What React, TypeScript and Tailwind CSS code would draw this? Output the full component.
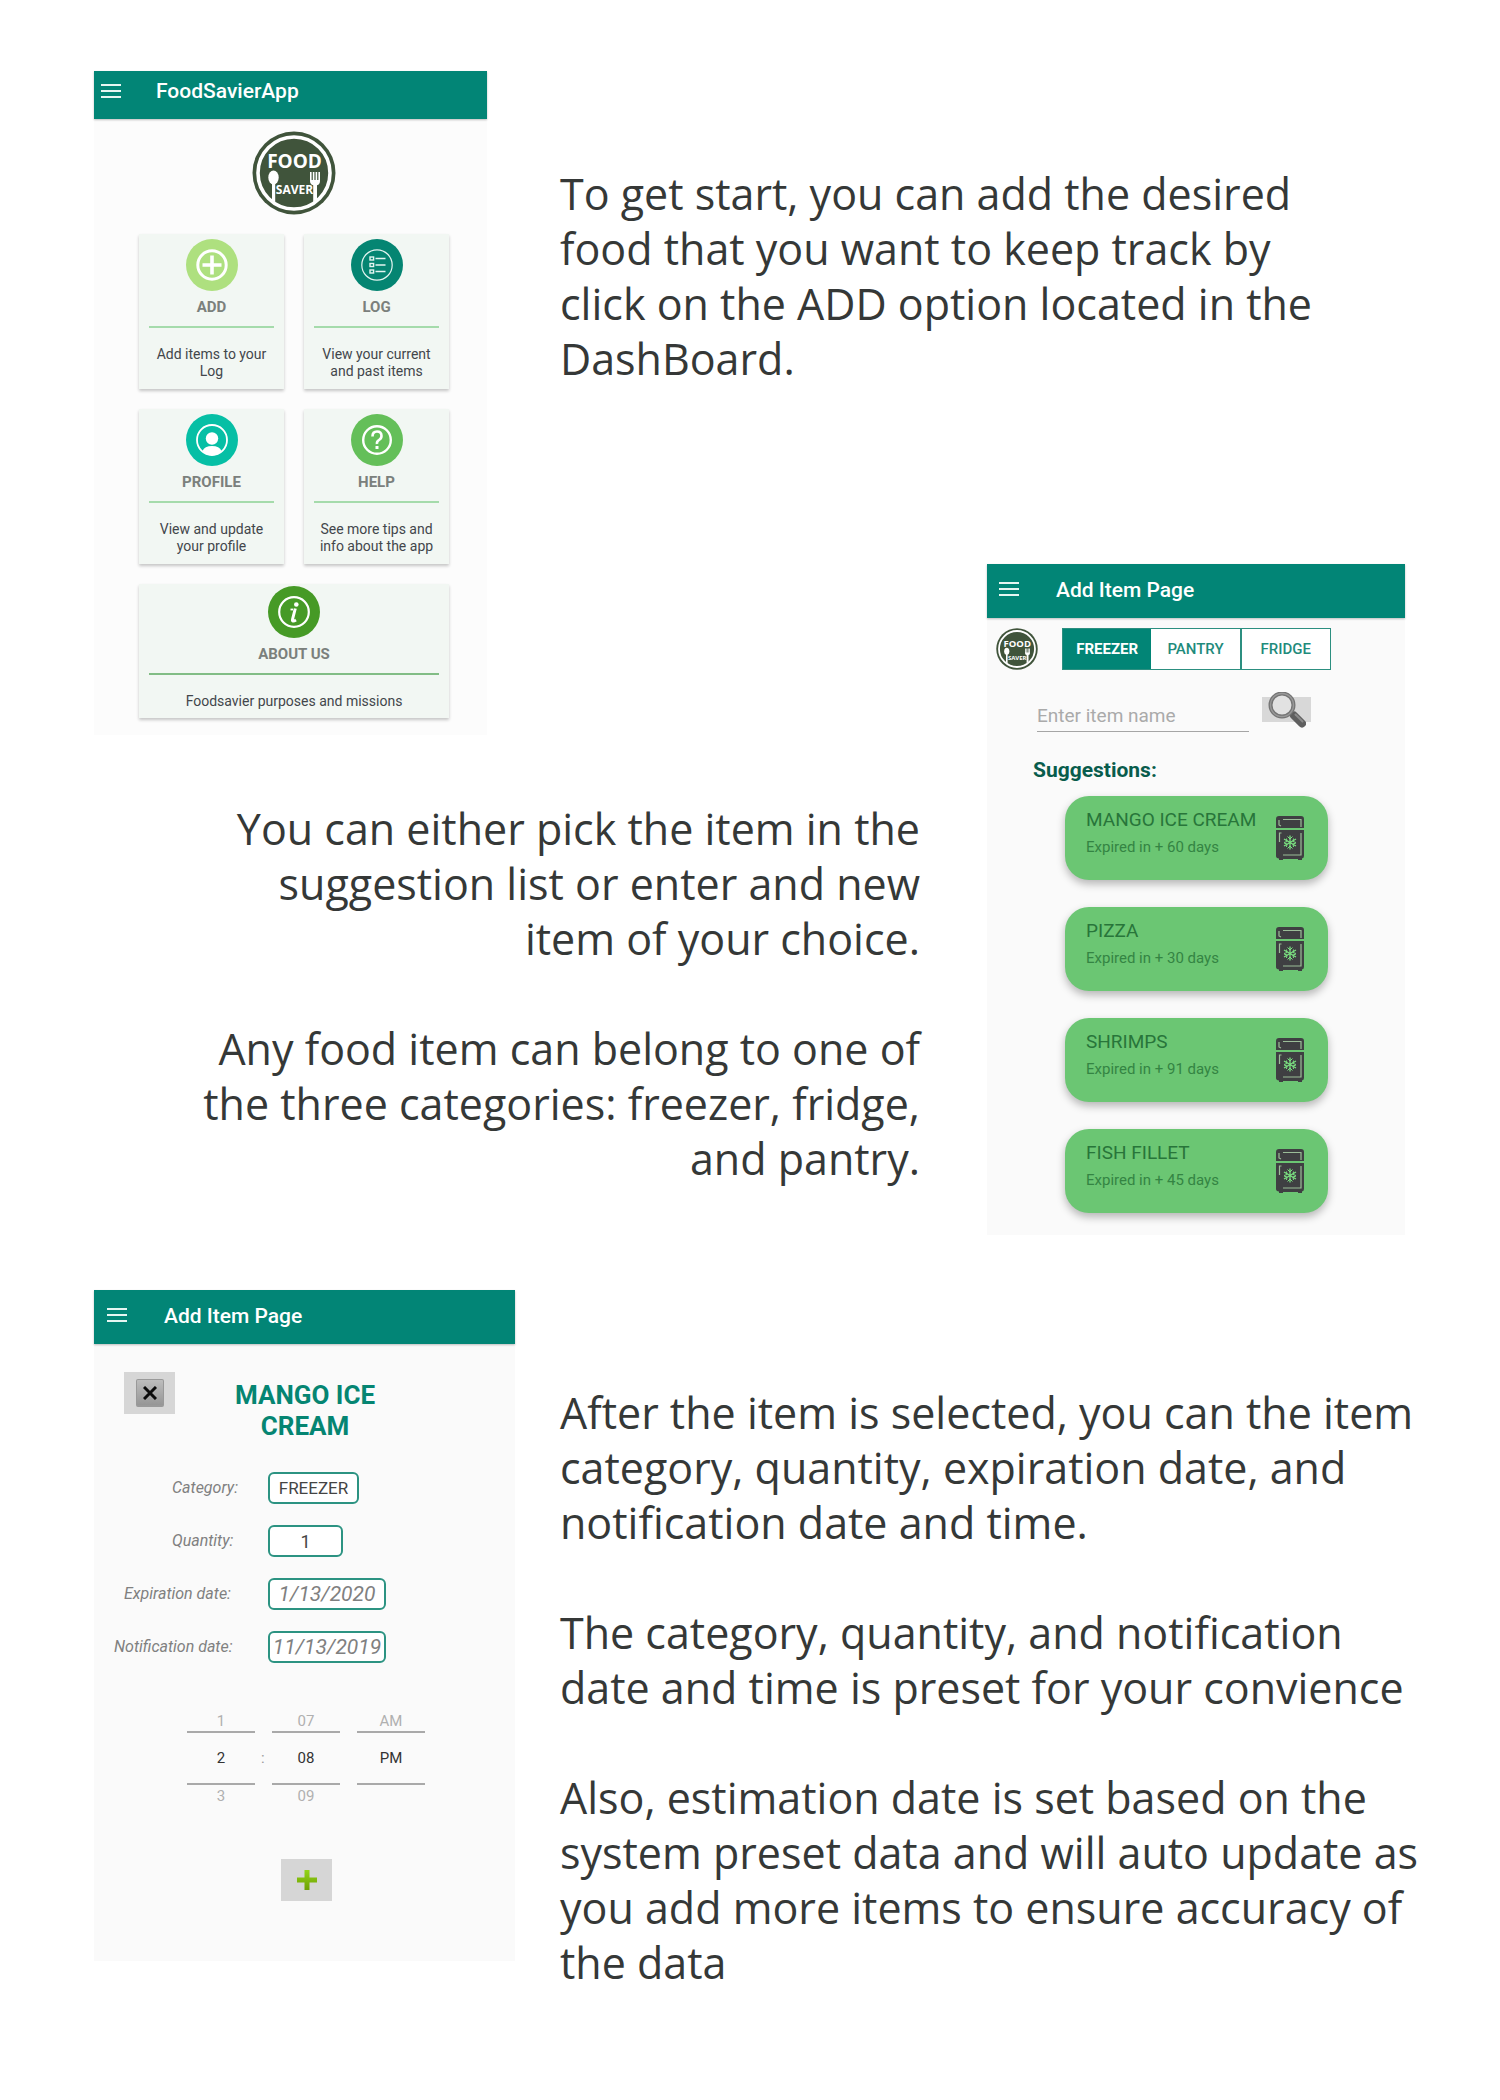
import React from "react";

const roboto = "font-['Roboto',sans-serif]";

function Logo({ className }: { className: string }) {
  return (
    <svg viewBox="0 0 84 84" className={className} role="img" aria-label="Food Saver">
      <circle cx="42" cy="42" r="41.5" fill="#40543b" />
      <circle cx="42" cy="42" r="36" fill="none" stroke="#fff" strokeWidth="3.6" />
      <text x="42.5" y="37" textAnchor="middle" fontFamily="'Open Sans', sans-serif" fontWeight="700" fontSize="19" fill="#fff">
        FOOD
      </text>
      <text x="42.5" y="63" textAnchor="middle" fontFamily="'Open Sans', sans-serif" fontWeight="700" fontSize="12" fill="#fff">
        SAVER
      </text>
      <ellipse cx="21.5" cy="46.5" rx="5.2" ry="7" fill="#fff" />
      <path d="M20 52h3.2v19.5L20 69z" fill="#fff" />
      <path d="M58 41h1.6v8h1.2v-8h1.6v8h1.2v-8h1.6v8h1.2v-8H68v9q0 3.5-3 4.2V68l-3.8 3V54.2Q58 53.5 58 50z" fill="#fff" />
    </svg>
  );
}

function MenuButton({ className }: { className: string }) {
  return (
    <button type="button" aria-label="Open menu" className={className}>
      <svg viewBox="0 0 20 14" className="block h-[14px] w-5" fill="#e6f6f2">
        <rect y="0" width="20" height="2" />
        <rect y="6" width="20" height="2" />
        <rect y="12" width="20" height="2" />
      </svg>
    </button>
  );
}

function AddIcon() {
  return (
    <svg viewBox="0 0 52 52" className="size-[52px]" fill="none" stroke="#fff" aria-hidden="true">
      <circle cx="26" cy="26" r="26" fill="#aee07f" stroke="none" />
      <circle cx="26" cy="26" r="14.2" strokeWidth="3" />
      <path d="M26 16.5v19M16.5 26h19" strokeWidth="3.6" />
    </svg>
  );
}

function LogIcon() {
  return (
    <svg viewBox="0 0 52 52" className="size-[52px]" fill="none" stroke="#e4f5f1" aria-hidden="true">
      <circle cx="26" cy="26" r="26" fill="#058572" stroke="none" />
      <circle cx="26" cy="26" r="15.2" strokeWidth="1.2" />
      <g strokeWidth="1.4">
        <rect x="19" y="18" width="3.6" height="3" />
        <rect x="19" y="24.5" width="3.6" height="3" />
        <rect x="19" y="31" width="3.6" height="3" />
        <path d="M24.5 19.5h10M24.5 26h10M24.5 32.5h10" />
      </g>
    </svg>
  );
}

function ProfileIcon() {
  return (
    <svg viewBox="0 0 52 52" className="size-[52px]" aria-hidden="true">
      <circle cx="26" cy="26" r="26" fill="#06bfa5" />
      <circle cx="26" cy="26" r="15" fill="none" stroke="#fff" strokeWidth="1.8" />
      <circle cx="26" cy="24.500" r="6.2" fill="#fff" />
      <path d="M16.5 37q2-5 9.500-5t9.500 5q-4 4.500-9.500 4.500T16.500 37z" fill="#fff" />
    </svg>
  );
}

function HelpIcon() {
  return (
    <svg viewBox="0 0 52 52" className="size-[52px]" fill="none" stroke="#fff" aria-hidden="true">
      <circle cx="26" cy="26" r="26" fill="#64bf59" stroke="none" />
      <circle cx="26" cy="26" r="13.8" strokeWidth="2.4" />
      <path d="M21.5 22.500q0-5 4.500-5t4.500 4.500q0 2.500-2.500 4t-2 4" strokeWidth="2.6" />
      <path d="M24.5 32h3v3h-3z" fill="#fff" stroke="none" />
    </svg>
  );
}

function InfoIcon() {
  return (
    <svg viewBox="0 0 52 52" className="size-[52px]" fill="none" stroke="#fff" aria-hidden="true">
      <circle cx="26" cy="26" r="26" fill="#469a26" stroke="none" />
      <circle cx="26" cy="26" r="14.8" strokeWidth="2.200" />
      <circle cx="28.3" cy="18.5" r="2.3" fill="#fff" stroke="none" />
      <path d="M22.500 23.500H25" strokeWidth="1.800" />
      <path d="M27.3 22.500l-2.700 10.500q-.8 3.500 3.400 1" strokeWidth="3" />
    </svg>
  );
}

function FridgeIcon() {
  return (
    <svg viewBox="0 0 28 44" className="h-11 w-7 shrink-0" fill="none" aria-hidden="true">
      <path d="M3 0h22q3 0 3 3v9H0V3q0-3 3-3zM0 14h28v26q0 2-2 2.500V44h-4v-1H7v1H3v-1.500Q0 42 0 40z" fill="#3f3f42" />
      <path d="M3 4v5l2 1M7 3.500h18V11M3.500 26v-9h2M25 17v22H7" stroke="#9bbd98" strokeWidth="1.200" />
      <g stroke="#7be081" strokeWidth="1.300">
        <path d="M14 19.500v14M8 23l12 7M20 23L8 30" />
        <path d="M11.500 20.500l2.500 2.500 2.500-2.500M11.500 32.500L14 30l2.500 2.500M8 26.500l3-1-.5-3M20 26.500l-3-1 .5-3M8 27l3 1-.5 3M20 27l-3 1 .5 3" strokeWidth="1" />
      </g>
    </svg>
  );
}

function SearchIcon() {
  return (
    <svg viewBox="0 0 38 36" className="h-9 w-[38px] shrink-0" fill="none" aria-hidden="true">
      <path d="M22 20l4 4" stroke="#8a8a8a" strokeWidth="4" />
      <path d="M26 23.500l8 8" stroke="#5f5f5f" strokeWidth="8" strokeLinecap="round" />
      <path d="M27.500 22.500l7 7" stroke="#8b8b8b" strokeWidth="2" strokeLinecap="round" />
      <circle cx="14" cy="13" r="11.500" fill="#e2e2e2" stroke="#757575" strokeWidth="4" />
      <circle cx="14" cy="13" r="11.500" stroke="#999" strokeWidth="1.400" />
    </svg>
  );
}

function DashboardCard({ icon, title, text, wide }: { icon: React.ReactNode; title: string; text: string; wide?: boolean }) {
  return (
    <a
      href="#"
      className={`flex flex-col items-center bg-[#f2f7f3] px-[10px] shadow-[0_2px_3px_rgba(0,0,0,0.22)] ${
        wide ? "col-span-2 pt-[2px] pb-2" : "pt-[5px] pb-[9px]"
      }`}
    >
      {icon}
      <span className="mt-[6px] text-[15px] leading-5 font-bold text-[#7b807c]">{title}</span>
      <span className={`mt-[9px] h-[2px] w-full ${wide ? "bg-[#82bd85]" : "bg-[#a5dbab]"}`} />
      <span className="mt-[18px] text-center text-[14px] leading-[17px] whitespace-pre-line text-[#42464b]">{text}</span>
    </a>
  );
}

function Dashboard() {
  return (
    <section className={`bg-[#fcfcfc] ${roboto}`}>
      <header className="flex h-12 items-start bg-[#028576] px-[7px] pt-2 shadow-[0_1px_2px_rgba(0,0,0,0.25)]">
        <MenuButton className="mt-[5px]" />
        <h1 className="ml-[35px] text-[21px] leading-6 font-medium text-white">FoodSavierApp</h1>
      </header>
      <div className="flex justify-center pt-3 pl-[6px]">
        <Logo className="size-[84px]" />
      </div>
      <nav className="grid grid-cols-2 gap-5 pt-[19px] pr-[38px] pb-[17px] pl-[45px]">
        <DashboardCard icon={<AddIcon />} title="ADD" text={"Add items to your\nLog"} />
        <DashboardCard icon={<LogIcon />} title="LOG" text={"View your current\nand past items"} />
        <DashboardCard icon={<ProfileIcon />} title="PROFILE" text={"View and update\nyour profile"} />
        <DashboardCard icon={<HelpIcon />} title="HELP" text={"See more tips and\ninfo about the app"} />
        <DashboardCard icon={<InfoIcon />} title="ABOUT US" text="Foodsavier purposes and missions" wide />
      </nav>
    </section>
  );
}

const suggestions = [
  { name: "MANGO ICE CREAM", days: 60 },
  { name: "PIZZA", days: 30 },
  { name: "SHRIMPS", days: 91 },
  { name: "FISH FILLET", days: 45 },
];

function ItemPicker() {
  return (
    <section className={`bg-[#fafafa] pb-[22px] ${roboto}`}>
      <header className="flex h-[54px] items-center bg-[#028576] px-3 pb-[2px] shadow-[0_1px_2px_rgba(0,0,0,0.25)]">
        <MenuButton className="-mt-[2px]" />
        <h2 className="ml-[37px] text-[21px] leading-6 font-medium text-white">Add Item Page</h2>
      </header>
      <div className="flex items-center gap-6 pt-[10px] pl-[9px]">
        <Logo className="size-[42px]" />
        <div className="flex h-[42px] w-[269px] border border-[#2c8f80] bg-white text-[15px] font-medium text-[#1f8b7c]">
          <button type="button" className="flex-1 bg-[#028576] font-bold text-white">FREEZER</button>
          <button type="button" className="flex-1">PANTRY</button>
          <button type="button" className="flex-1 border-l-2 border-[#2c8f80]">FRIDGE</button>
        </div>
      </div>
      <div className="flex items-start gap-[13px] pt-[21px] pl-[50px]">
        <input
          type="text"
          aria-label="Item name"
          placeholder="Enter item name"
          className="mt-[9px] h-8 w-[212px] border-b border-[#a5a5a5] bg-transparent text-[19px] placeholder-[#aaaaaa] outline-none"
        />
        <button type="button" aria-label="Search" className="mt-[6px] flex h-[25px] w-[49px] items-center justify-center bg-[#d8d8d8]">
          <SearchIcon />
        </button>
      </div>
      <h3 className="mt-[26px] ml-[46px] text-[21px] leading-6 font-bold text-[#085c4c]">Suggestions:</h3>
      <ul className="mt-[14px] mr-[77px] ml-[78px] flex flex-col gap-[27px]">
        {suggestions.map((item) => (
          <li key={item.name}>
            <button
              type="button"
              className="flex h-[84px] w-full items-center justify-between rounded-3xl bg-[#6bc673] pr-6 pl-[21px] text-left shadow-[0_4px_9px_rgba(0,0,0,0.28)]"
            >
              <span className="flex h-full flex-col pt-3">
                <span className="text-[19px] leading-6 text-[#28753a]">{item.name}</span>
                <span className="mt-[5px] text-[15px] leading-5 text-[#348443]">Expired in + {item.days} days</span>
              </span>
              <FridgeIcon />
            </button>
          </li>
        ))}
      </ul>
    </section>
  );
}

const fieldBase = "h-8 rounded-md border-2 border-[#2c9382] bg-white text-center outline-none";

function ItemForm() {
  const columns = [
    { label: "Hour", values: ["1", "2", "3"] },
    { label: "Minute", values: ["07", "08", "09"] },
    { label: "Period", values: ["AM", "PM", ""] },
  ];
  const fields = [
    { id: "category", label: "Category:", value: "FREEZER", pad: "pl-[78px]", box: "w-[91px] text-[17px] text-[#444]" },
    { id: "quantity", label: "Quantity:", value: "1", pad: "pl-[78px]", box: "w-[75px] text-[18px] text-[#444]" },
    { id: "expiration", label: "Expiration date:", value: "1/13/2020", pad: "pl-[30px]", box: "w-[118px] text-[21px] italic text-[#808080]" },
    { id: "notification", label: "Notification date:", value: "11/13/2019", pad: "pl-5", box: "w-[118px] text-[21px] italic text-[#808080]" },
  ];
  return (
    <section className={`bg-[#fafafa] pb-[60px] ${roboto}`}>
      <header className="flex h-[54px] items-center bg-[#028576] px-[13px] pb-[2px] shadow-[0_1px_2px_rgba(0,0,0,0.25)]">
        <MenuButton className="-mt-[2px]" />
        <h2 className="ml-[37px] text-[21px] leading-6 font-medium text-white">Add Item Page</h2>
      </header>
      <div className="flex items-start pt-7 pl-[30px]">
        <button type="button" aria-label="Close" className="flex h-[42px] w-[51px] items-center justify-center bg-[#d6d6d6]">
          <span className="flex size-7 items-center justify-center rounded-xs border border-b-2 border-[#999] bg-linear-to-b from-[#bdbdbd] to-[#969696]">
            <svg viewBox="0 0 14 14" className="size-[14px]" stroke="#0b0b0b" strokeWidth="3" aria-hidden="true">
              <path d="M1 1l12 12M13 1L1 13" />
            </svg>
          </span>
        </button>
        <h3 className="mt-2 ml-[50px] w-40 text-center text-[26px] leading-[31px] font-bold text-[#058572]">MANGO ICE CREAM</h3>
      </div>
      <div className="mt-[30px] flex flex-col gap-[21px]">
        {fields.map((f) => (
          <div key={f.id} className="flex items-center">
            <label htmlFor={f.id} className={`w-[174px] text-[16px] leading-6 whitespace-nowrap text-[#808080] italic ${f.pad}`}>
              {f.label}
            </label>
            <input id={f.id} type="text" defaultValue={f.value} className={`${fieldBase} ${f.box}`} />
          </div>
        ))}
      </div>
      <div className="relative mt-[48px] ml-[93px] flex gap-[17px] text-center text-[15px]">
        {columns.map((c) => (
          <div key={c.label} role="group" aria-label={c.label} className="flex w-[68px] flex-col">
            <span className="h-5 leading-5 text-[#b0b0b0]">{c.values[0]}</span>
            <span className="h-[54px] border-y-2 border-[#a9a9a9] leading-[50px] text-[#333]">{c.values[1]}</span>
            <span className="h-5 leading-[22px] text-[#b0b0b0]">{c.values[2]}</span>
          </div>
        ))}
        <span className="absolute top-[37px] left-[74px] leading-5 text-[#999]">:</span>
      </div>
      <button type="button" aria-label="Add item" className="mt-[54px] ml-[187px] flex h-[42px] w-[51px] items-center justify-center bg-[#d6d6d6]">
        <svg viewBox="0 0 20 20" className="size-5" aria-hidden="true">
          <defs>
            <linearGradient id="plus" x1="0" y1="0" x2="0" y2="1">
              <stop offset="0" stopColor="#93d417" />
              <stop offset="1" stopColor="#6ea005" />
            </linearGradient>
          </defs>
          <path d="M7.500 0h5v7.500H20v5h-7.500V20h-5v-7.500H0v-5h7.500z" fill="url(#plus)" />
        </svg>
      </button>
    </section>
  );
}

const copy = "font-['Open_Sans',sans-serif] text-[43px] leading-[55px] whitespace-pre-line text-[#353837]";

export default function App() {
  return (
    <main className="min-h-screen bg-white pt-[71px] pr-10 pb-[100px] pl-[94px]">
      <div className="mr-[55px] grid grid-cols-[393px_1fr_418px] grid-rows-[493px_173px_auto]">
        <div className="col-start-1 row-span-2 row-start-1">
          <Dashboard />
        </div>
        <p className={`col-span-2 col-start-2 row-start-1 pt-[95px] pl-[73px] ${copy}`}>
          {"To get start, you can add the desired\nfood that you want to keep track by\nclick on the ADD option located in the\nDashBoard."}
        </p>
        <div className="col-start-3 row-span-2 row-start-2">
          <ItemPicker />
        </div>
        <div className={`col-span-2 col-start-1 row-start-3 pt-16 pr-[67px] text-right ${copy}`}>
          <p>{"You can either pick the item in the\nsuggestion list or enter and new\nitem of your choice."}</p>
          <p className="mt-[55px]">{"Any food item can belong to one of\nthe three categories: freezer, fridge,\nand pantry."}</p>
        </div>
      </div>
      <div className="mt-[55px] grid grid-cols-[421px_1fr] items-start">
        <ItemForm />
        <div className={`pt-[95px] pl-[45px] ${copy}`}>
          <p>{"After the item is selected, you can the item\ncategory, quantity, expiration date, and\nnotification date and time."}</p>
          <p className="mt-[55px]">{"The category, quantity, and notification\ndate and time is preset for your convience"}</p>
          <p className="mt-[55px]">
            {"Also, estimation date is set based on the\nsystem preset data and will auto update as\nyou add more items to ensure accuracy of\nthe data"}
          </p>
        </div>
      </div>
    </main>
  );
}
